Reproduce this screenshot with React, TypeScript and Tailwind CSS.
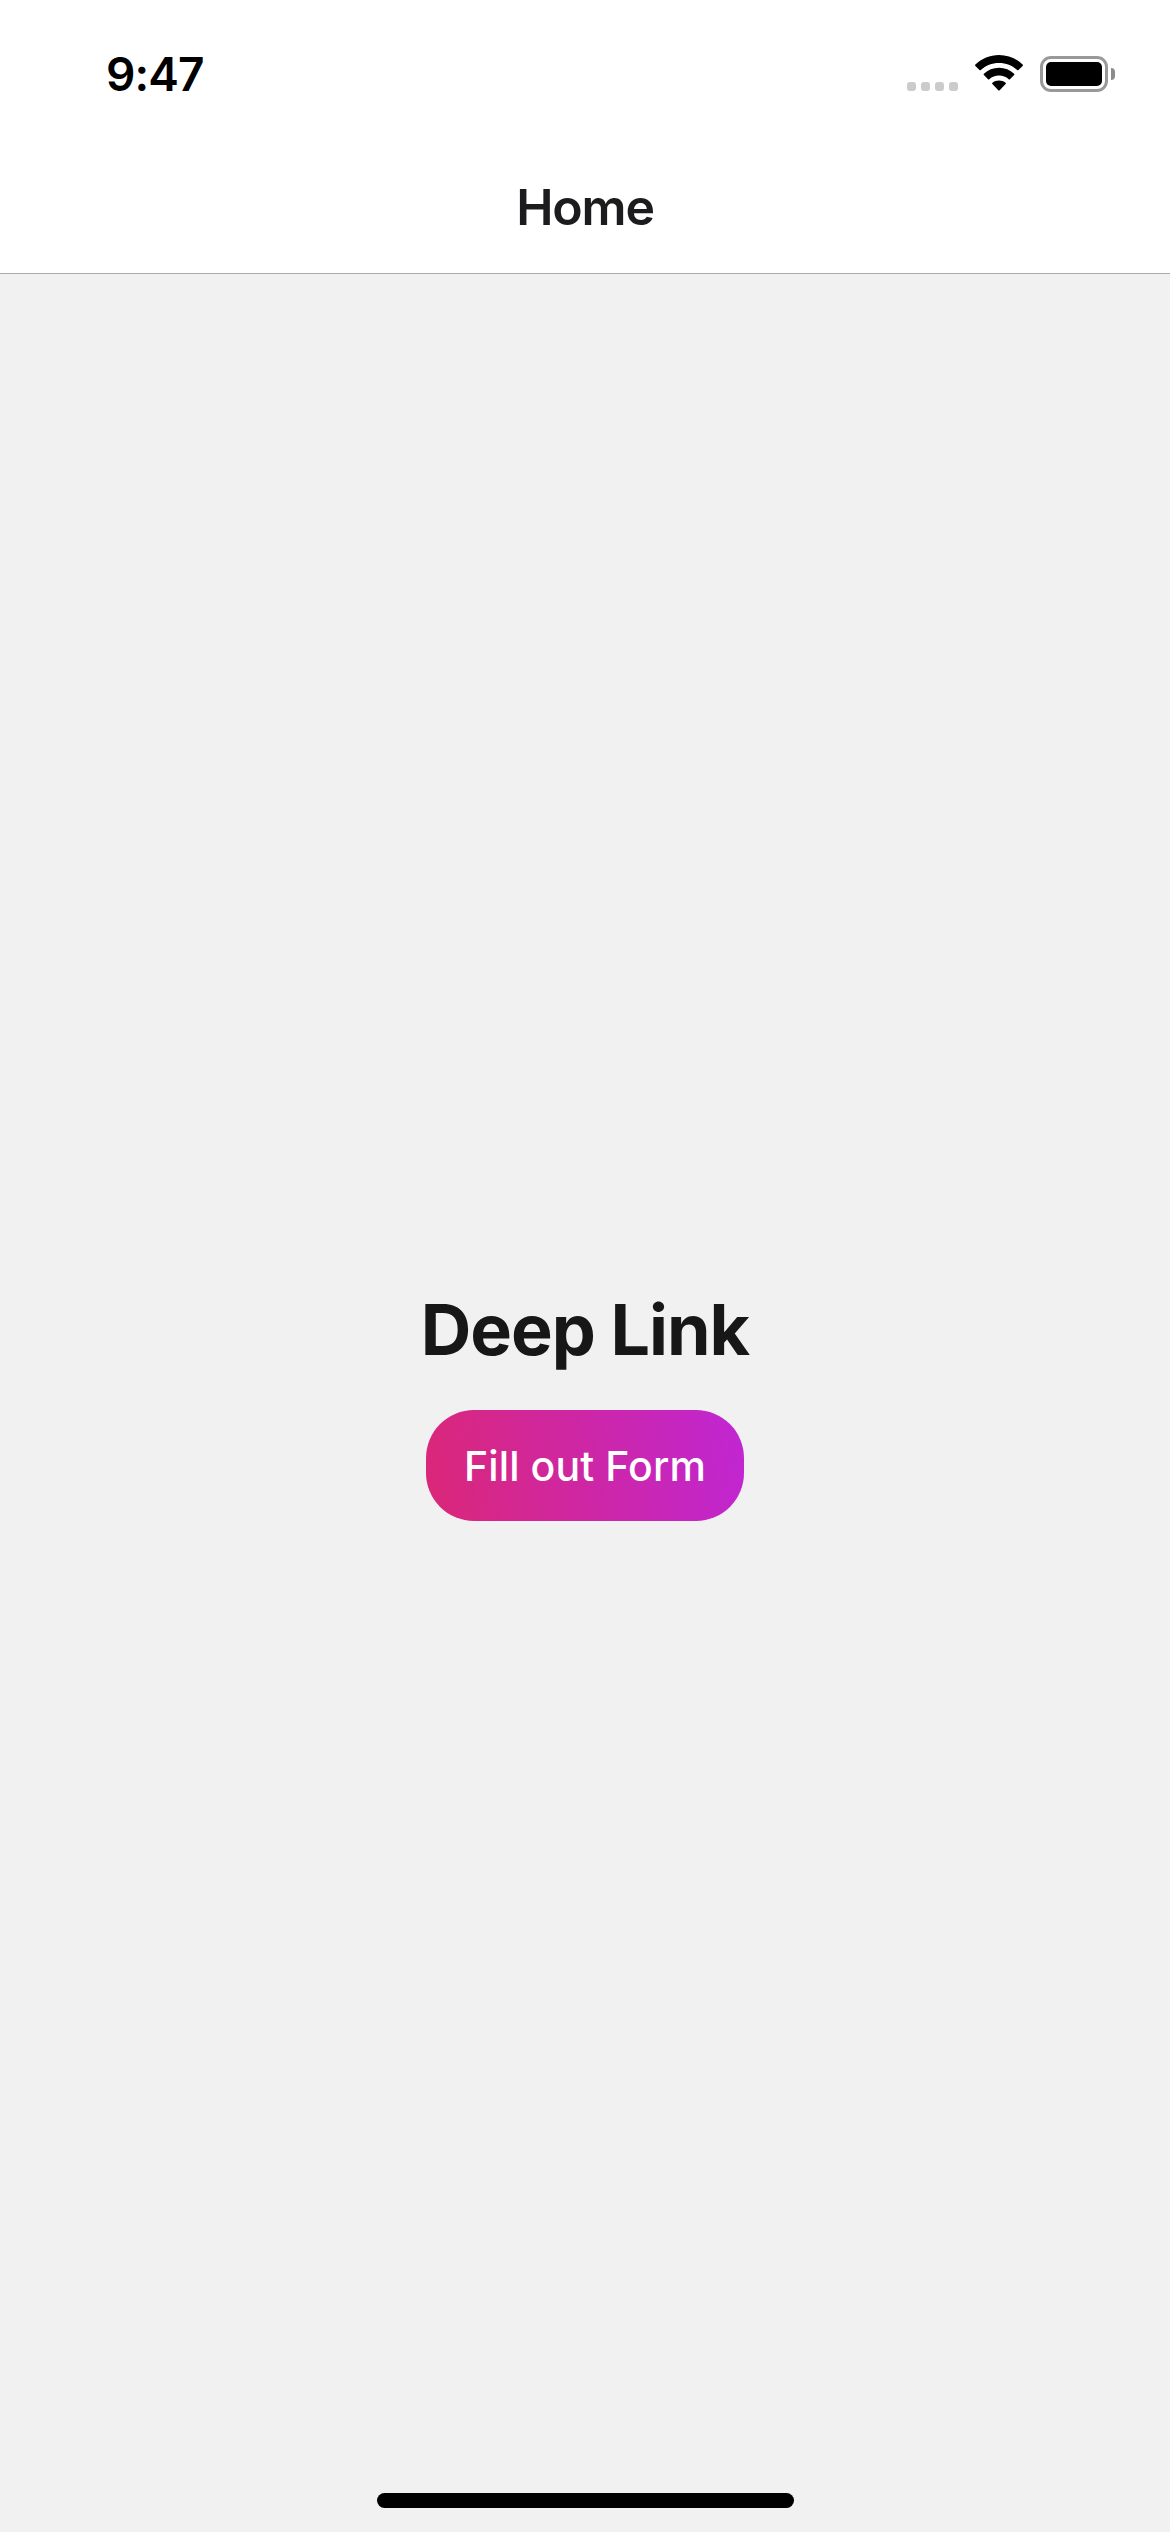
function Signal() {
  return (
    <div className="flex gap-[5px]">
      {[0, 1, 2, 3].map((i) => (
        <span key={i} className="size-[9px] shrink-0 rounded-[3px] bg-[#cbcbcb]" />
      ))}
    </div>
  );
}

function Wifi() {
  return (
    <svg width="48" height="36" viewBox="0 0 48 36" fill="#000">
      <path d="M24 0C33 0 41.500 3.600 47.600 9.500Q48.300 10.200 47.600 10.900L43.500 15Q42.900 15.600 42.200 15C37.300 10.400 31 7.900 24 7.900S10.700 10.400 5.800 15Q5.100 15.600 4.500 15L.4 10.900Q-.3 10.200 .4 9.500C6.500 3.600 15 0 24 0Z" />
      <path d="M24 12.800C29.800 12.800 35.100 15 39.100 18.700Q39.800 19.400 39.100 20.100L35 24.200Q34.400 24.800 33.700 24.200C31.100 21.900 27.700 20.600 24 20.600S16.900 21.900 14.300 24.200Q13.600 24.800 13 24.200L8.900 20.100Q8.200 19.400 8.900 18.700C12.900 15 18.200 12.800 24 12.800Z" />
      <path d="M24 25.400C26.500 25.400 28.800 26.300 30.600 27.700Q31.300 28.400 30.600 29.100L24.700 35.200Q24 35.900 23.300 35.200L17.400 29.100Q16.700 28.400 17.400 27.700C19.200 26.300 21.500 25.400 24 25.400Z" />
    </svg>
  );
}

function Battery() {
  return (
    <div className="flex items-center gap-[3px]">
      <div className="h-9 w-[68px] rounded-[11px] border-[3px] border-[#999] p-[3px]">
        <div className="h-full rounded-[5px] bg-black" />
      </div>
      <div className="h-3 w-1 rounded-r-full bg-[#8c8c8c]" />
    </div>
  );
}

export default function App() {
  return (
    <div className="flex h-[2532px] w-[1170px] flex-col bg-[#f1f1f1] font-['Inter',sans-serif]">
      <header className="h-[274px] shrink-0 border-b border-[#a9a9a9] bg-white">
        <div className="flex h-[141px] items-start justify-between pr-[55px] pl-[106px]">
          <time className="mt-[49px] text-[46px] leading-[50px] font-semibold tracking-[-0.9px] text-black">9:47</time>
          <div className="mt-[55px] flex items-start">
            <div className="mt-[27px] mr-[17px]">
              <Signal />
            </div>
            <div className="mr-[17px]">
              <Wifi />
            </div>
            <div className="mt-px">
              <Battery />
            </div>
          </div>
        </div>
        <h1 className="text-center text-[50px] leading-[132px] font-semibold tracking-[-1.2px] text-[#1c1c1e]">Home</h1>
      </header>
      <main className="flex flex-1 flex-col items-center pt-[1012px]">
        <h2 className="text-[70px] leading-[87px] font-bold tracking-[-1px] text-[#171717]">Deep Link</h2>
        <button className="mt-[37px] h-[111px] w-[318px] rounded-[48px] bg-[linear-gradient(81deg,#db2777,#c026d3)] text-[41px] leading-[112px] font-medium tracking-[0.1px] whitespace-nowrap text-white">
          Fill out Form
        </button>
      </main>
      <div className="mx-auto mb-6 h-[15px] w-[417px] rounded-full bg-black" />
    </div>
  );
}
